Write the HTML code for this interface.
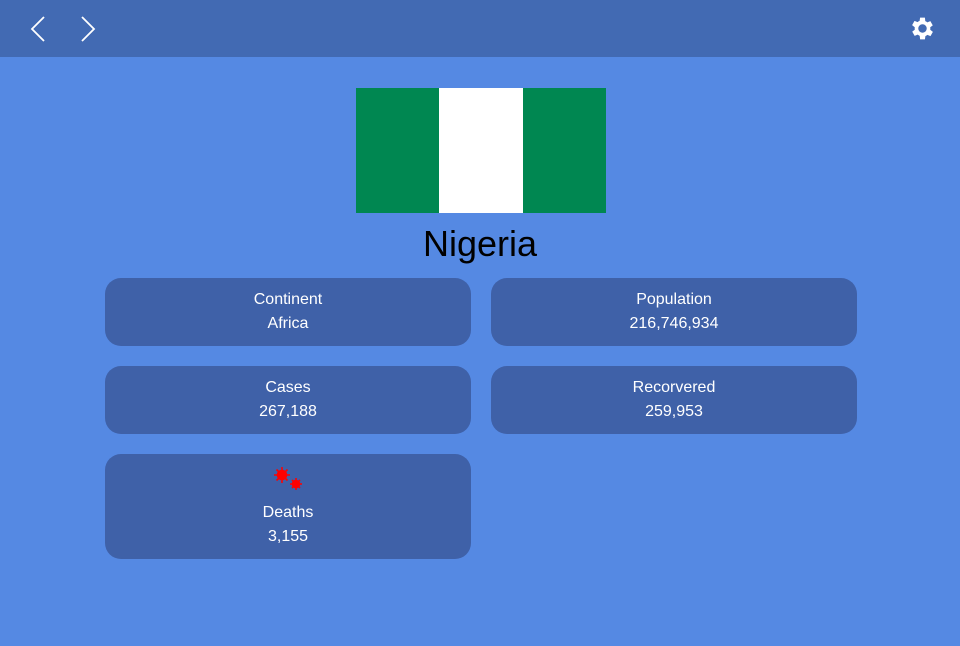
<!DOCTYPE html>
<html><head><style>
body{margin:0;width:960px;height:646px;background:#5589e3;font-family:"Liberation Sans",sans-serif;overflow:hidden;position:relative}
.hdr{position:absolute;left:0;top:0;width:960px;height:57px;background:#426ab3}
.flag{position:absolute;left:356px;top:88px;width:250px;height:125px;display:flex}
.flag div{flex:1}
h1{position:absolute;top:223px;left:0;width:960px;text-align:center;margin:0;font-weight:normal;font-size:36px;color:#000}
.card{position:absolute;width:366px;background:#3f61a8;border-radius:16px;color:#fff;text-align:center;font-size:16px;line-height:24px}
</style></head><body>
<div class="hdr">
<svg style="position:absolute;left:28px;top:15px" width="20" height="28"><path d="M16 2 L4 14 L16 26" stroke="#fff" stroke-width="1.8" fill="none"/></svg>
<svg style="position:absolute;left:78px;top:15px" width="20" height="28"><path d="M4 2 L16 14 L4 26" stroke="#fff" stroke-width="1.8" fill="none"/></svg>
<svg style="position:absolute;left:908px;top:14px" width="29" height="29" viewBox="0 0 24 24"><path fill="#fff" d="M19.4 13a7.5 7.5 0 0 0 0-2l2.1-1.6-2-3.5-2.5 1a7 7 0 0 0-1.7-1L15 3h-4l-.4 2.7a7 7 0 0 0-1.7 1l-2.5-1-2 3.5L6.6 11a7.5 7.5 0 0 0 0 2l-2.1 1.6 2 3.5 2.5-1a7 7 0 0 0 1.7 1L11 21h4l.4-2.7a7 7 0 0 0 1.7-1l2.5 1 2-3.5zM13 15.5a3.5 3.5 0 1 1 0-7 3.5 3.5 0 0 1 0 7z" transform="translate(-1 0)"/></svg>
</div>
<div class="flag"><div style="background:#008751"></div><div style="background:#fff"></div><div style="background:#008751"></div></div>
<h1>Nigeria</h1>
<div class="card" style="left:105px;top:278px;height:68px;padding-top:10px;box-sizing:border-box">Continent<br>Africa</div>
<div class="card" style="left:491px;top:278px;height:68px;padding-top:10px;box-sizing:border-box">Population<br>216,746,934</div>
<div class="card" style="left:105px;top:366px;height:68px;padding-top:10px;box-sizing:border-box">Cases<br>267,188</div>
<div class="card" style="left:491px;top:366px;height:68px;padding-top:10px;box-sizing:border-box">Recorvered<br>259,953</div>
<div class="card" style="left:105px;top:454px;height:105px;padding-top:47px;box-sizing:border-box">Deaths<br>3,155
<svg style="position:absolute;left:166px;top:10px" width="36" height="30">
<g fill="red" stroke="red" stroke-width="1.6">
<circle cx="11" cy="11" r="4.5"/><path d="M11 3v16M3 11h16M5.5 5.5l11 11M16.5 5.5l-11 11"/>
<circle cx="25" cy="20" r="3.5"/><path d="M25 14v12M19 20h12M21 16l8 8M29 16l-8 8"/>
</g></svg></div>
</body></html>
